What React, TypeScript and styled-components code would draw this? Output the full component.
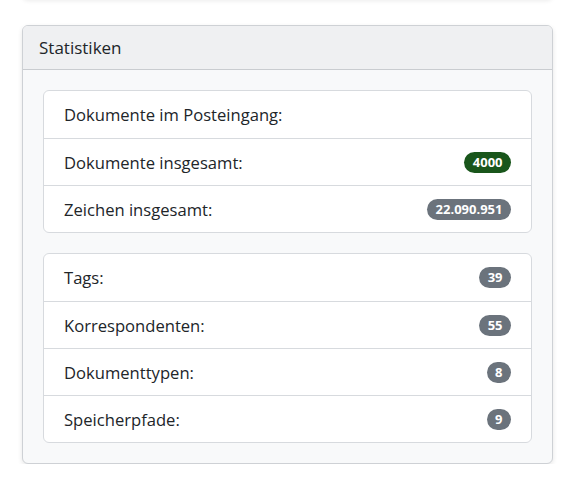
import styled, { createGlobalStyle } from "styled-components";

const Global = createGlobalStyle`
  body {
    margin: 0;
    background: #fff;
    font-family: "Segoe UI", "Open Sans", "Noto Sans", sans-serif;
    color: #212529;
  }
`;

const Page = styled.div`
  padding: 0 29px 0 22px;
`;

const PrevCard = styled.div`
  height: 12px;
  margin-top: -12px;
  margin-bottom: 25px;
  border-radius: 6px;
  box-shadow: 0 1px 4px rgba(0, 0, 0, 0.08);
`;

const Card = styled.div`
  border: 1px solid #ced1d5;
  border-radius: 6px;
  background: #f8f9fa;
  box-shadow: 0 2px 5px rgba(0, 0, 0, 0.1);
  overflow: hidden;
`;

const CardHeader = styled.div`
  background: #eff0f2;
  border-bottom: 1px solid #c9ccd0;
  padding: 10px 16px 9px;
  font-size: 17px;
  line-height: 24px;
`;

const CardBody = styled.div`
  padding: 20px;
  display: flex;
  flex-direction: column;
  gap: 20px;
`;

const List = styled.ul`
  list-style: none;
  margin: 0;
  padding: 0;
  background: #fff;
  border: 1px solid #d7dade;
  border-radius: 6px;
`;

const Item = styled.li`
  display: flex;
  align-items: center;
  justify-content: space-between;
  height: 47px;
  padding: 0 20px;
  font-size: 16.6px;
  box-sizing: border-box;
  & + & {
    border-top: 1px solid #d7dade;
  }
`;

const Badge = styled.span<{ $tone?: "success" | "secondary" }>`
  display: inline-block;
  padding: 0 8.5px;
  height: 21px;
  line-height: 21px;
  text-align: center;
  border-radius: 11px;
  font-size: 13px;
  font-weight: 700;
  color: #fff;
  background: ${(p) => (p.$tone === "success" ? "#19561b" : "#6b737c")};
`;

const App = () => {
  return (
    <Page>
      <Global />
      <PrevCard />
      <Card>
        <CardHeader>Statistiken</CardHeader>
        <CardBody>
          <List>
            <Item>Dokumente im Posteingang:</Item>
            <Item>
              Dokumente insgesamt: <Badge $tone="success">4000</Badge>
            </Item>
            <Item>
              Zeichen insgesamt: <Badge>22.090.951</Badge>
            </Item>
          </List>
          <List>
            <Item>
              Tags: <Badge>39</Badge>
            </Item>
            <Item>
              Korrespondenten: <Badge>55</Badge>
            </Item>
            <Item>
              Dokumenttypen: <Badge>8</Badge>
            </Item>
            <Item>
              Speicherpfade: <Badge>9</Badge>
            </Item>
          </List>
        </CardBody>
      </Card>
    </Page>
  );
};

export default App;
